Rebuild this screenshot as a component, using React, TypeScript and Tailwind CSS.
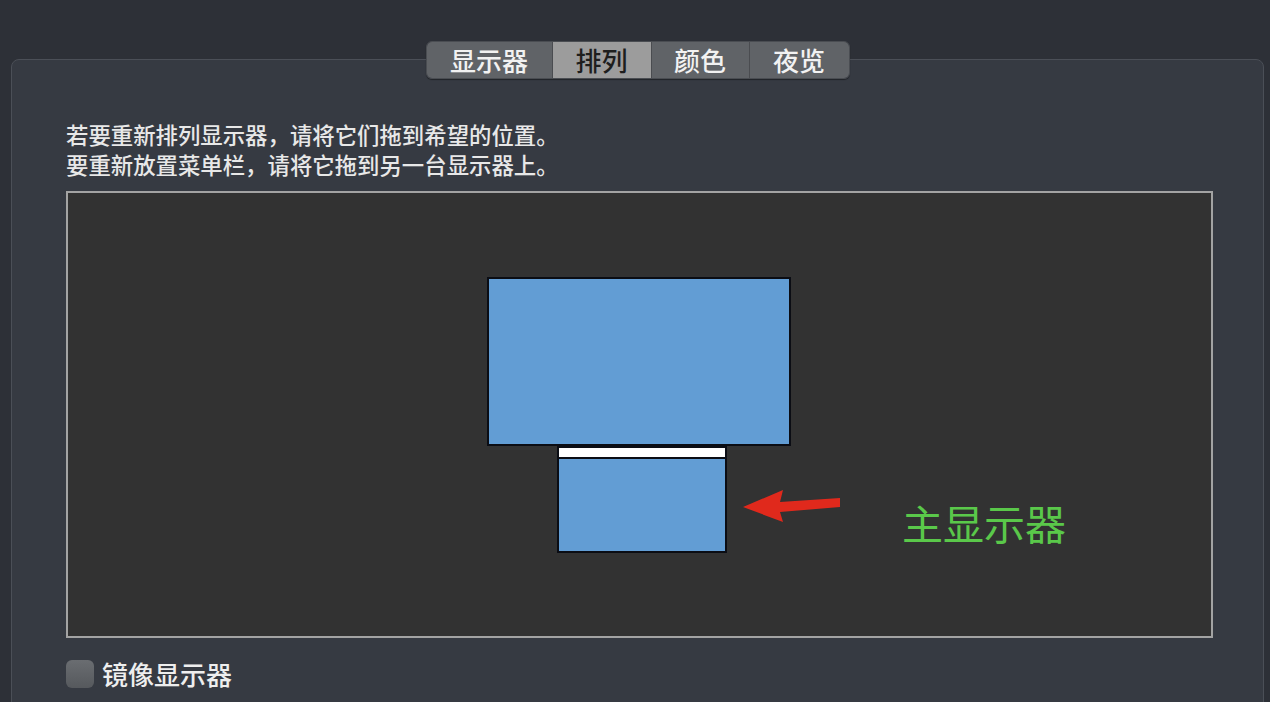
const tabs = ['显示器', '排列', '颜色', '夜览'];
const tabWidths = ['w-[125px]', 'w-[99px]', 'w-[98px]', 'w-[100px]'];

export default function App() {
  const selected = 1;

  return (
    <div
      className="w-[1270px] h-[702px] overflow-hidden bg-[#2d3037] pl-[11px] pr-[6px] pt-[59px]"
      style={{ fontFamily: '"Noto Sans CJK SC", "Noto Sans", sans-serif' }}
    >
      <div className="h-[700px] rounded-t-[8px] border border-[#4b4f57] bg-[#363a42] pl-[54px]">
        {/* segmented tabs, sitting on the panel's top border */}
        <div className="-mt-[19px] flex justify-center pr-[54px]">
          <div className="flex h-[38px] overflow-hidden rounded-[6px] border border-[#4a4d52] shadow-[0_1px_1px_rgba(0,0,0,0.4)]">
            {tabs.map((t, i) => (
              <div
                key={t}
                className={`${tabWidths[i]} flex items-center justify-center text-[26px] font-medium leading-none ${
                  i === selected ? 'bg-[#9c9c9c] text-[#1e1e1e]' : 'bg-[#606367] text-[#f2f2f2]'
                } ${i > 0 ? 'border-l border-[#4a4c50]' : ''}`}
              >
                {t}
              </div>
            ))}
          </div>
        </div>

        <div className="mt-[40px] text-[22.4px] font-medium leading-[30px] text-[#e8e8e8]">
          <div>若要重新排列显示器，请将它们拖到希望的位置。</div>
          <div>要重新放置菜单栏，请将它拖到另一台显示器上。</div>
        </div>

        {/* arrangement canvas */}
        <div className="relative mt-[12px] h-[447px] w-[1147px] border-2 border-[#a3a3a3] bg-[#323232]">
          <div className="absolute left-[419px] top-[84px] h-[169px] w-[304px] border-2 border-[#0b0d14] bg-[#629dd4]" />
          <div className="absolute left-[489px] top-[253px] flex h-[107px] w-[170px] flex-col border-2 border-[#0b0d14] bg-[#629dd4]">
            <div className="h-[11px] border-b-2 border-[#0b0d14] bg-white" />
          </div>
          <svg className="absolute left-[672px] top-[296px]" width="104" height="36" viewBox="0 0 104 36">
            <path d="M3 18 L43 1 L40 13 L100 9 L100 18 L40 23 L43 33 Z" fill="#e0291c" />
          </svg>
          <div className="absolute left-[834px] top-[309px] text-[41px] leading-none text-[#5ac84a]">主显示器</div>
        </div>

        <div className="mt-[22px] flex items-center gap-[8px]">
          <div className="h-[28px] w-[28px] rounded-[6px] bg-gradient-to-b from-[#6a6d71] to-[#56595d]" />
          <div className="text-[26px] font-medium leading-none text-[#eeeeee]">镜像显示器</div>
        </div>
      </div>
    </div>
  );
}
